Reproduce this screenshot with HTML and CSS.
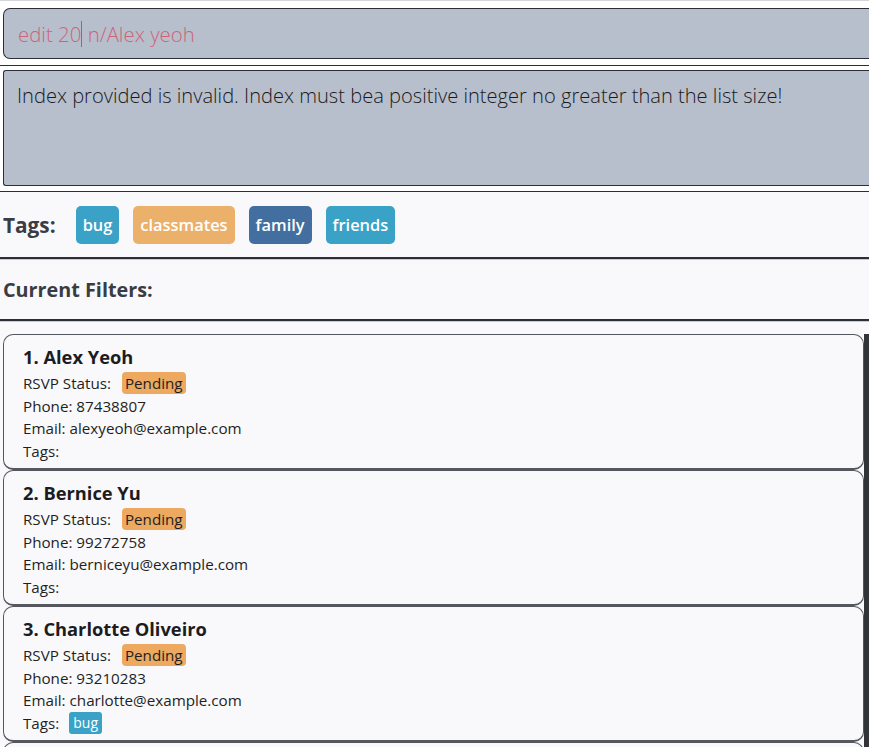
FILE: index.html
```html
<!DOCTYPE html>
<html>
<head>
<meta charset="utf-8">
<link rel="stylesheet" href="styles.css">
</head>
<body>
<div class="app">
  <div class="cmd-pane">
    <div class="cmd-box"><span class="cmd-text">edit 20</span><span class="caret"></span><span class="cmd-text">&nbsp;n/Alex yeoh</span></div>
  </div>
  <div class="divider thin"></div>
  <div class="result-pane">
    <div class="result-box">Index provided is invalid. Index must bea positive integer no greater than the list size!</div>
  </div>
  <div class="divider thin"></div>
  <div class="tags-row">
    <span class="section-label">Tags:</span>
    <span class="chip teal">bug</span>
    <span class="chip orange">classmates</span>
    <span class="chip steel">family</span>
    <span class="chip teal">friends</span>
  </div>
  <div class="divider thick"></div>
  <div class="filters-row">
    <span class="section-label">Current Filters:</span>
  </div>
  <div class="divider thick"></div>
  <div class="list-wrap">
    <div class="list">
      <div class="card">
        <div class="name">1. Alex Yeoh</div>
        <div class="line">RSVP Status: <span class="badge">Pending</span></div>
        <div class="line">Phone: 87438807</div>
        <div class="line">Email: alexyeoh@example.com</div>
        <div class="line">Tags:</div>
      </div>
      <div class="card">
        <div class="name">2. Bernice Yu</div>
        <div class="line">RSVP Status: <span class="badge">Pending</span></div>
        <div class="line">Phone: 99272758</div>
        <div class="line">Email: berniceyu@example.com</div>
        <div class="line">Tags:</div>
      </div>
      <div class="card">
        <div class="name">3. Charlotte Oliveiro</div>
        <div class="line">RSVP Status: <span class="badge">Pending</span></div>
        <div class="line">Phone: 93210283</div>
        <div class="line">Email: charlotte@example.com</div>
        <div class="line">Tags: <span class="mini-tag">bug</span></div>
      </div>
      <div class="card"></div>
    </div>
    <div class="scrollbar"></div>
  </div>
</div>
</body>
</html>
```

FILE: styles.css
```css
* { box-sizing: border-box; }
html, body { margin: 0; padding: 0; }
body {
  background: #f9f9fb;
  font-family: "Open Sans", Lato, sans-serif;
  color: #1f1f22;
  overflow: hidden;
  height: 747px;
}
.app { width: 869px; height: 747px; overflow: hidden; }

.cmd-pane {
  background: #ffffff;
  border-top: 1px solid #d3d4d9;
  padding: 7px 0 6px 3px;
}
.cmd-box {
  height: 51px;
  margin-right: -10px;
  background: #b8bfcc;
  border: 1px solid #2d2f38;
  border-right: none;
  border-radius: 7px 0 0 7px;
  padding: 0 0 0 14px;
  display: flex;
  align-items: center;
  font-size: 20.4px;
  font-weight: 300;
  color: #cc6479;
}
.caret {
  display: inline-block;
  width: 1px;
  height: 26px;
  background: #c9506a;
}

.divider.thin { height: 1px; background: #2d2f38; }
.divider.thick { height: 3px; background: #2d2f38; border-bottom: 1px solid #c8cad0; }

.result-pane {
  background: #ffffff;
  padding: 4px 0 5px 3px;
}
.result-box {
  height: 116px;
  margin-right: -10px;
  background: #b8bfcc;
  border: 1px solid #2d2f38;
  border-right: none;
  border-radius: 3px 0 0 3px;
  padding: 11px 0 0 13px;
  font-size: 20.1px;
  font-weight: 300;
  color: #1a1a1c;
  white-space: nowrap;
}

.tags-row {
  height: 65px;
  display: flex;
  align-items: center;
  padding-left: 3px;
}
.section-label {
  font-size: 20px;
  font-weight: 700;
  color: #3a3c44;
}
.tags-row .section-label { margin-right: 20px; font-size: 20.8px; }
.chip {
  height: 38px;
  display: inline-flex;
  align-items: center;
  padding: 0 7px;
  margin-right: 14px;
  border-radius: 5px;
  color: #ffffff;
  font-size: 16.4px;
  font-weight: 600;
}
.teal { background: #3aa1c7; }
.orange { background: #ebb06a; }
.steel { background: #426fa0; }

.filters-row {
  height: 59px;
  display: flex;
  align-items: center;
  padding-left: 3px;
}
.filters-row .section-label { font-size: 19.8px; }

.list-wrap {
  margin-top: 12px;
  display: flex;
  align-items: stretch;
  height: 414px;
}
.list {
  flex: 1;
  padding-left: 3px;
  display: flex;
  flex-direction: column;
  overflow: hidden;
}
.scrollbar {
  width: 5px;
  background: #333438;
}
.card {
  height: 136px;
  flex: none;
  border: 1px solid #55575f;
  border-bottom-width: 2px;
  border-radius: 10px;
  background: #f9f9fb;
  padding: 10px 0 0 19px;
}
.name {
  font-size: 18.3px;
  font-weight: 700;
  color: #1c1c1f;
  height: 27px;
  line-height: 24px;
}
.line {
  font-size: 15.2px;
  height: 22.5px;
  line-height: 22px;
  color: #1f1f22;
  display: flex;
  align-items: center;
  white-space: pre;
}
.badge {
  display: inline-block;
  background: #eca95f;
  border-radius: 4px;
  padding: 0 3px;
  margin-left: 7px;
  line-height: 22px;
  font-size: 15.2px;
}
.mini-tag {
  display: inline-block;
  background: #3aa1c7;
  color: #ffffff;
  border-radius: 3px;
  padding: 0 4px;
  margin-left: 6px;
  line-height: 22px;
  font-size: 14px;
}
```
